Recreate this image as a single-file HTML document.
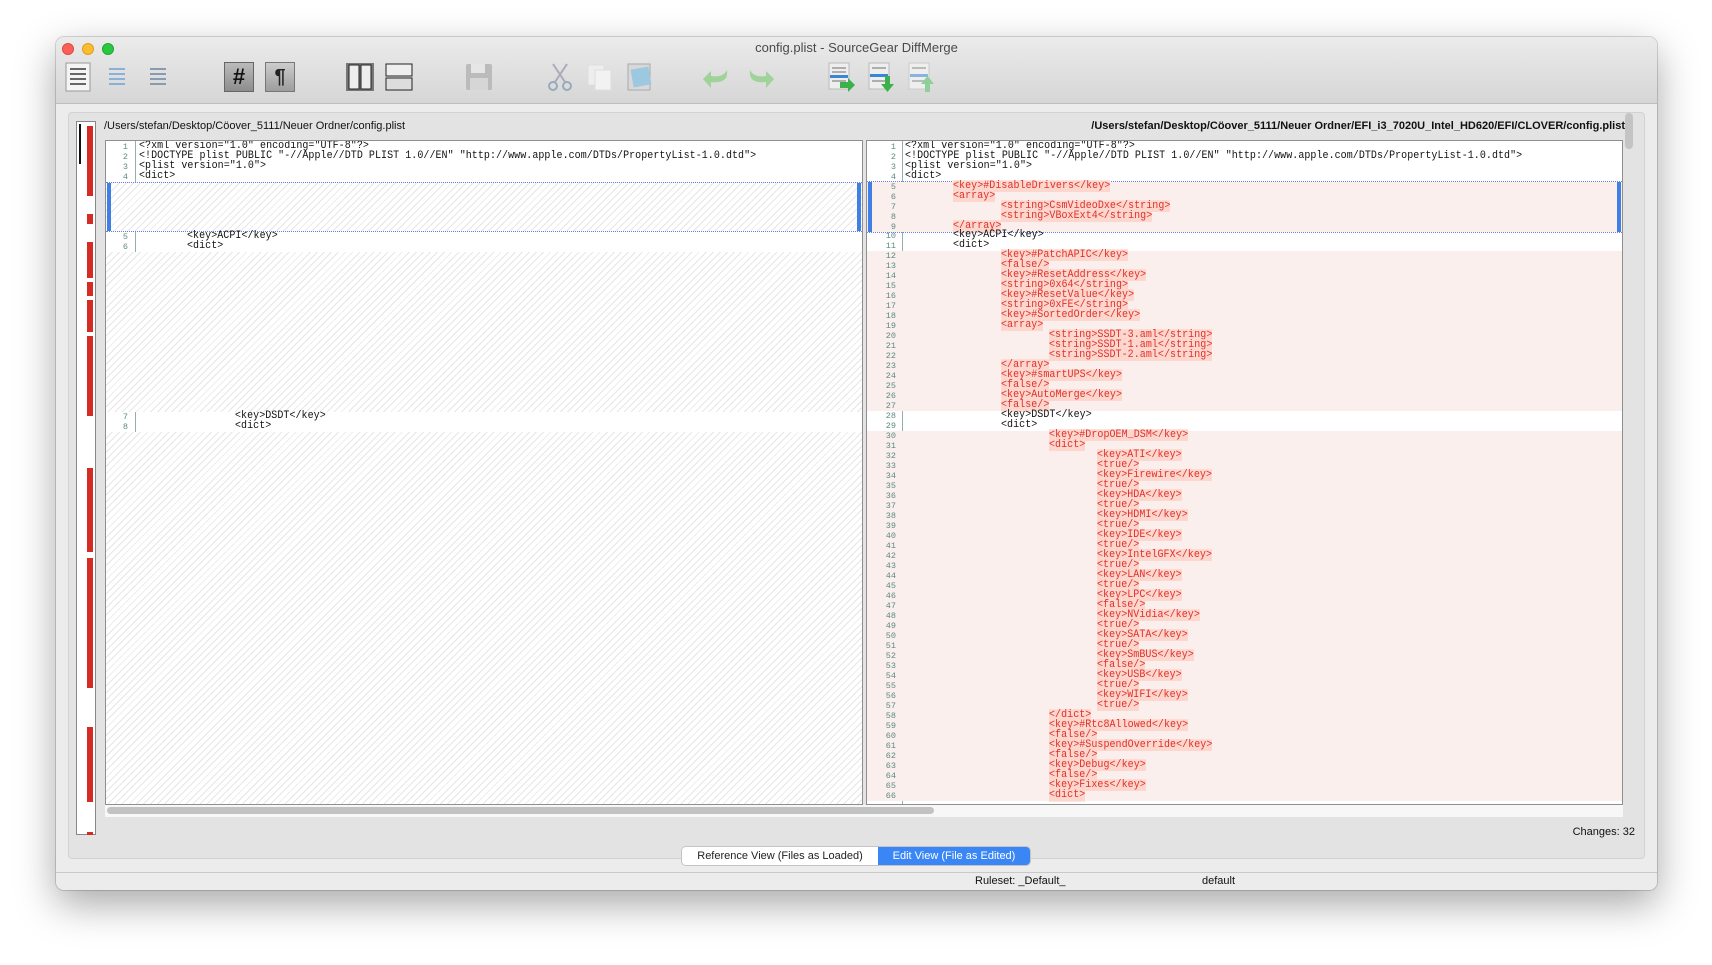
<!DOCTYPE html>
<html><head><meta charset="utf-8"><style>
*{box-sizing:border-box;margin:0;padding:0}
body{width:1712px;height:965px;background:#fff;position:relative;overflow:hidden;font-family:"Liberation Sans",sans-serif}
.win{position:absolute;left:56px;top:37px;width:1601px;height:853px;border-radius:8px;background:#ececec;box-shadow:0 14px 40px rgba(0,0,0,.35),0 0 0 1px rgba(0,0,0,.15);overflow:hidden}
.tb{position:absolute;left:0;top:0;width:100%;height:67px;background:linear-gradient(#ebebeb,#d6d6d6);border-bottom:1px solid #bdbdbd}
.tl{position:absolute;top:6px;width:12px;height:12px;border-radius:50%}
.title{position:absolute;top:3px;left:0;width:100%;text-align:center;font-size:13px;color:#4a4a4a}
.ic{position:absolute;top:25px}
.grp{position:absolute;left:12px;top:75px;width:1577px;height:747px;background:#e3e3e3;border:1px solid #d2d2d2;border-radius:4px}
.path{position:absolute;top:83px;font-size:11px;color:#111}
.pane{position:absolute;top:103px;height:665px;background:#fff;border:1px solid #8f8f8f;overflow:hidden}
.gut{position:absolute;left:0;top:0;height:100%;border-right:1px solid #8fb3a8}
.rows{position:absolute;left:0;top:1px;width:100%}
.r{height:10px;position:relative;font-family:"Liberation Mono",monospace;font-size:10px;line-height:10px;white-space:pre;color:#111}
.r .n{position:absolute;left:0;text-align:right;font-size:8.5px;color:#5c8a82}
.r .t{position:absolute;letter-spacing:0.05px;transform:scaleY(1.12);transform-origin:0 50%}
.h{background:repeating-linear-gradient(135deg,#fff 0 4px,#e6e6e6 4px 5px)}
.p{background:#faefed}
.p .t span{background:#fdd6cd;color:#e0302a}
.L .n{width:22px}.L .t{left:33px}
.R .n{width:29px}.R .t{left:38px}
.ov{position:absolute;background:#d42b24;left:10px;width:6px}
</style></head><body>
<div class="win">
<div class="tb">
<div class="tl" style="left:6px;background:#fc5f57;border:1px solid #de4a41"></div>
<div class="tl" style="left:26px;background:#fdbc2e;border:1px solid #dd9f21"></div>
<div class="tl" style="left:46px;background:#29c840;border:1px solid #1ea932"></div>
<div class="title">config.plist - SourceGear DiffMerge</div>
<svg class="ic" style="left:8px" width="30" height="30"><rect x="2" y="1" width="24" height="28" fill="#f4f4f4" stroke="#999"/><g stroke="#666" stroke-width="2"><line x1="6" y1="7" x2="22" y2="7"/><line x1="6" y1="12" x2="22" y2="12"/><line x1="6" y1="17" x2="22" y2="17"/><line x1="6" y1="22" x2="22" y2="22"/></g></svg>
<svg class="ic" style="left:49px" width="30" height="30"><g stroke="#8ab0d8" stroke-width="2"><line x1="4" y1="7" x2="20" y2="7"/><line x1="4" y1="12" x2="20" y2="12"/><line x1="4" y1="17" x2="20" y2="17"/><line x1="4" y1="22" x2="20" y2="22"/></g></svg>
<svg class="ic" style="left:90px" width="30" height="30"><g stroke="#8a9ab0" stroke-width="2"><line x1="4" y1="7" x2="20" y2="7"/><line x1="4" y1="12" x2="20" y2="12"/><line x1="4" y1="17" x2="20" y2="17"/><line x1="4" y1="22" x2="20" y2="22"/></g></svg>
<div class="ic" style="left:168px;top:25px;width:30px;height:30px;background:linear-gradient(#bbb,#8d8d8d);border:1px solid #666;font:bold 22px 'Liberation Sans';text-align:center;line-height:28px;color:#111">#</div>
<div class="ic" style="left:209px;top:25px;width:30px;height:30px;background:linear-gradient(#ccc,#9d9d9d);border:1px solid #777;font:bold 20px 'Liberation Sans';text-align:center;line-height:28px;color:#222">¶</div>
<svg class="ic" style="left:289px" width="30" height="30"><rect x="1" y="1" width="28" height="28" fill="#777"/><rect x="4" y="3" width="10" height="24" fill="#eee" stroke="#222"/><rect x="16" y="3" width="10" height="24" fill="#eee" stroke="#222"/></svg>
<svg class="ic" style="left:328px" width="30" height="30"><rect x="2" y="2" width="26" height="12" fill="#eee" stroke="#222"/><rect x="2" y="16" width="26" height="12" fill="#ddd" stroke="#222"/></svg>
<svg class="ic" style="left:408px" width="30" height="30"><rect x="2" y="2" width="26" height="26" rx="2" fill="#bbb"/><rect x="7" y="2" width="14" height="9" fill="#e6e6e6"/><rect x="6" y="16" width="18" height="12" fill="#d6d6d6"/></svg>
<svg class="ic" style="left:489px" width="30" height="30"><g stroke="#aab" stroke-width="2" fill="none"><line x1="8" y1="2" x2="20" y2="20"/><line x1="22" y1="2" x2="10" y2="20"/><circle cx="8" cy="24" r="4" stroke="#9ab"/><circle cx="22" cy="24" r="4" stroke="#9ab"/></g></svg>
<svg class="ic" style="left:529px" width="30" height="30"><rect x="3" y="3" width="16" height="20" fill="#eee" stroke="#ddd"/><rect x="10" y="8" width="16" height="20" fill="#f2f2f2" stroke="#ddd"/></svg>
<svg class="ic" style="left:569px" width="30" height="30"><rect x="3" y="2" width="22" height="26" fill="#d8d8d8" stroke="#aaa"/><rect x="7" y="6" width="18" height="18" fill="#9cc8e0" transform="rotate(-10 16 15)"/></svg>
<svg class="ic" style="left:645px" width="32" height="30"><path d="M26 8 Q28 22 10 20 L10 26 L2 17 L10 9 L10 14 Q22 16 26 8Z" fill="#9fd39a"/></svg>
<svg class="ic" style="left:688px" width="32" height="30"><path d="M6 8 Q4 22 22 20 L22 26 L30 17 L22 9 L22 14 Q10 16 6 8Z" fill="#9fd39a"/></svg>
<svg class="ic" style="left:770px" width="32" height="32"><rect x="3" y="1" width="20" height="26" fill="#eee" stroke="#bbb"/><g stroke="#999" stroke-width="1.5"><line x1="6" y1="6" x2="20" y2="6"/><line x1="6" y1="10" x2="20" y2="10"/><line x1="6" y1="19" x2="20" y2="19"/></g><rect x="4" y="13" width="18" height="3" fill="#3a86d6"/><path d="M14 20 h8 v-4 l7 7 -7 7 v-4 h-8z" fill="#3cb04a"/></svg>
<svg class="ic" style="left:810px" width="32" height="32"><rect x="3" y="1" width="20" height="26" fill="#eee" stroke="#bbb"/><g stroke="#999" stroke-width="1.5"><line x1="6" y1="6" x2="20" y2="6"/><line x1="6" y1="19" x2="20" y2="19"/></g><rect x="4" y="12" width="18" height="3" fill="#3a86d6"/><path d="M19 14 h5 v8 h4 l-6.5 8 -6.5 -8 h4z" fill="#3cb04a"/></svg>
<svg class="ic" style="left:850px" width="32" height="32"><rect x="3" y="1" width="20" height="26" fill="#eee" stroke="#ccc"/><g stroke="#aaa" stroke-width="1.5"><line x1="6" y1="6" x2="20" y2="6"/><line x1="6" y1="19" x2="20" y2="19"/></g><rect x="4" y="12" width="18" height="3" fill="#8ab4e0"/><path d="M19 30 h5 v-8 h4 l-6.5 -8 -6.5 8 h4z" fill="#8fd098"/></svg>
</div>
<div class="grp"></div>
<div style="position:absolute;left:20px;top:84px;width:20px;height:714px;background:#fff;border:1px solid #888">
 <div style="position:absolute;left:2px;top:2px;width:2px;height:40px;background:#111"></div>
 <div class="ov" style="top:4px;height:70px"></div><div class="ov" style="top:92px;height:10px"></div>
 <div class="ov" style="top:120px;height:36px"></div><div class="ov" style="top:160px;height:14px"></div>
 <div class="ov" style="top:178px;height:32px"></div><div class="ov" style="top:214px;height:80px"></div>
 <div class="ov" style="top:346px;height:84px"></div><div class="ov" style="top:436px;height:130px"></div>
 <div class="ov" style="top:605px;height:75px"></div><div class="ov" style="top:710px;height:3px"></div>
</div>
<div class="path" style="left:48px">/Users/stefan/Desktop/Cöover_5111/Neuer Ordner/config.plist</div>
<div class="path" style="right:32px;font-weight:bold">/Users/stefan/Desktop/Cöover_5111/Neuer Ordner/EFI_i3_7020U_Intel_HD620/EFI/CLOVER/config.plist</div>
<div style="position:absolute;left:1569px;top:76px;width:8px;height:36px;border-radius:4px;background:#c4c4c4"></div>

<div class="pane L" style="left:49px;width:758px">
<div class="gut" style="width:30px"></div>
<div class="rows">
<div class="r"><span class="n">1</span><span class="t">&lt;?xml version="1.0" encoding="UTF-8"?&gt;</span></div>
<div class="r"><span class="n">2</span><span class="t">&lt;!DOCTYPE plist PUBLIC "-//Apple//DTD PLIST 1.0//EN" "http://www.apple.com/DTDs/PropertyList-1.0.dtd"&gt;</span></div>
<div class="r"><span class="n">3</span><span class="t">&lt;plist version="1.0"&gt;</span></div>
<div class="r"><span class="n">4</span><span class="t">&lt;dict&gt;</span></div>
<div class="h" style="height:50px;border-top:1px dotted #6b7bea;border-bottom:1px dotted #6b7bea;position:relative"><div style="position:absolute;left:1px;top:0;width:4px;height:100%;background:#3f7fe6"></div><div style="position:absolute;right:1px;top:0;width:4px;height:100%;background:#3f7fe6"></div></div>
<div class="r"><span class="n">5</span><span class="t" style="left:81px">&lt;key&gt;ACPI&lt;/key&gt;</span></div>
<div class="r"><span class="n">6</span><span class="t" style="left:81px">&lt;dict&gt;</span></div>
<div class="h" style="height:160px"></div>
<div class="r"><span class="n">7</span><span class="t" style="left:129px">&lt;key&gt;DSDT&lt;/key&gt;</span></div>
<div class="r"><span class="n">8</span><span class="t" style="left:129px">&lt;dict&gt;</span></div>
<div class="h" style="height:380px"></div>
</div></div>

<div class="pane R" style="left:810px;width:757px">
<div class="gut" style="width:36px"></div>
<div class="rows">
<div class="r"><span class="n">1</span><span class="t">&lt;?xml version="1.0" encoding="UTF-8"?&gt;</span></div>
<div class="r"><span class="n">2</span><span class="t">&lt;!DOCTYPE plist PUBLIC "-//Apple//DTD PLIST 1.0//EN" "http://www.apple.com/DTDs/PropertyList-1.0.dtd"&gt;</span></div>
<div class="r"><span class="n">3</span><span class="t">&lt;plist version="1.0"&gt;</span></div>
<div class="r"><span class="n">4</span><span class="t">&lt;dict&gt;</span></div>
<div style="position:relative;border-top:1px dotted #6b7bea;border-bottom:1px dotted #6b7bea;margin-bottom:-2px;margin-top:-1px">
<div style="position:absolute;left:1px;top:0;width:4px;height:100%;background:#3f7fe6;z-index:2"></div><div style="position:absolute;right:1px;top:0;width:4px;height:100%;background:#3f7fe6;z-index:2"></div>
<div class="r p"><span class="n">5</span><span class="t" style="left:86px"><span>&lt;key&gt;#DisableDrivers&lt;/key&gt;</span></span></div>
<div class="r p"><span class="n">6</span><span class="t" style="left:86px"><span>&lt;array&gt;</span></span></div>
<div class="r p"><span class="n">7</span><span class="t" style="left:134px"><span>&lt;string&gt;CsmVideoDxe&lt;/string&gt;</span></span></div>
<div class="r p"><span class="n">8</span><span class="t" style="left:134px"><span>&lt;string&gt;VBoxExt4&lt;/string&gt;</span></span></div>
<div class="r p"><span class="n">9</span><span class="t" style="left:86px"><span>&lt;/array&gt;</span></span></div>
</div>
<div class="r"><span class="n">10</span><span class="t" style="left:86px">&lt;key&gt;ACPI&lt;/key&gt;</span></div>
<div class="r"><span class="n">11</span><span class="t" style="left:86px">&lt;dict&gt;</span></div>
<div class="r p"><span class="n">12</span><span class="t" style="left:134px"><span>&lt;key&gt;#PatchAPIC&lt;/key&gt;</span></span></div>
<div class="r p"><span class="n">13</span><span class="t" style="left:134px"><span>&lt;false/&gt;</span></span></div>
<div class="r p"><span class="n">14</span><span class="t" style="left:134px"><span>&lt;key&gt;#ResetAddress&lt;/key&gt;</span></span></div>
<div class="r p"><span class="n">15</span><span class="t" style="left:134px"><span>&lt;string&gt;0x64&lt;/string&gt;</span></span></div>
<div class="r p"><span class="n">16</span><span class="t" style="left:134px"><span>&lt;key&gt;#ResetValue&lt;/key&gt;</span></span></div>
<div class="r p"><span class="n">17</span><span class="t" style="left:134px"><span>&lt;string&gt;0xFE&lt;/string&gt;</span></span></div>
<div class="r p"><span class="n">18</span><span class="t" style="left:134px"><span>&lt;key&gt;#SortedOrder&lt;/key&gt;</span></span></div>
<div class="r p"><span class="n">19</span><span class="t" style="left:134px"><span>&lt;array&gt;</span></span></div>
<div class="r p"><span class="n">20</span><span class="t" style="left:182px"><span>&lt;string&gt;SSDT-3.aml&lt;/string&gt;</span></span></div>
<div class="r p"><span class="n">21</span><span class="t" style="left:182px"><span>&lt;string&gt;SSDT-1.aml&lt;/string&gt;</span></span></div>
<div class="r p"><span class="n">22</span><span class="t" style="left:182px"><span>&lt;string&gt;SSDT-2.aml&lt;/string&gt;</span></span></div>
<div class="r p"><span class="n">23</span><span class="t" style="left:134px"><span>&lt;/array&gt;</span></span></div>
<div class="r p"><span class="n">24</span><span class="t" style="left:134px"><span>&lt;key&gt;#smartUPS&lt;/key&gt;</span></span></div>
<div class="r p"><span class="n">25</span><span class="t" style="left:134px"><span>&lt;false/&gt;</span></span></div>
<div class="r p"><span class="n">26</span><span class="t" style="left:134px"><span>&lt;key&gt;AutoMerge&lt;/key&gt;</span></span></div>
<div class="r p"><span class="n">27</span><span class="t" style="left:134px"><span>&lt;false/&gt;</span></span></div>
<div class="r"><span class="n">28</span><span class="t" style="left:134px">&lt;key&gt;DSDT&lt;/key&gt;</span></div>
<div class="r"><span class="n">29</span><span class="t" style="left:134px">&lt;dict&gt;</span></div>
<div class="r p"><span class="n">30</span><span class="t" style="left:182px"><span>&lt;key&gt;#DropOEM_DSM&lt;/key&gt;</span></span></div>
<div class="r p"><span class="n">31</span><span class="t" style="left:182px"><span>&lt;dict&gt;</span></span></div>
<div class="r p"><span class="n">32</span><span class="t" style="left:230px"><span>&lt;key&gt;ATI&lt;/key&gt;</span></span></div>
<div class="r p"><span class="n">33</span><span class="t" style="left:230px"><span>&lt;true/&gt;</span></span></div>
<div class="r p"><span class="n">34</span><span class="t" style="left:230px"><span>&lt;key&gt;Firewire&lt;/key&gt;</span></span></div>
<div class="r p"><span class="n">35</span><span class="t" style="left:230px"><span>&lt;true/&gt;</span></span></div>
<div class="r p"><span class="n">36</span><span class="t" style="left:230px"><span>&lt;key&gt;HDA&lt;/key&gt;</span></span></div>
<div class="r p"><span class="n">37</span><span class="t" style="left:230px"><span>&lt;true/&gt;</span></span></div>
<div class="r p"><span class="n">38</span><span class="t" style="left:230px"><span>&lt;key&gt;HDMI&lt;/key&gt;</span></span></div>
<div class="r p"><span class="n">39</span><span class="t" style="left:230px"><span>&lt;true/&gt;</span></span></div>
<div class="r p"><span class="n">40</span><span class="t" style="left:230px"><span>&lt;key&gt;IDE&lt;/key&gt;</span></span></div>
<div class="r p"><span class="n">41</span><span class="t" style="left:230px"><span>&lt;true/&gt;</span></span></div>
<div class="r p"><span class="n">42</span><span class="t" style="left:230px"><span>&lt;key&gt;IntelGFX&lt;/key&gt;</span></span></div>
<div class="r p"><span class="n">43</span><span class="t" style="left:230px"><span>&lt;true/&gt;</span></span></div>
<div class="r p"><span class="n">44</span><span class="t" style="left:230px"><span>&lt;key&gt;LAN&lt;/key&gt;</span></span></div>
<div class="r p"><span class="n">45</span><span class="t" style="left:230px"><span>&lt;true/&gt;</span></span></div>
<div class="r p"><span class="n">46</span><span class="t" style="left:230px"><span>&lt;key&gt;LPC&lt;/key&gt;</span></span></div>
<div class="r p"><span class="n">47</span><span class="t" style="left:230px"><span>&lt;false/&gt;</span></span></div>
<div class="r p"><span class="n">48</span><span class="t" style="left:230px"><span>&lt;key&gt;NVidia&lt;/key&gt;</span></span></div>
<div class="r p"><span class="n">49</span><span class="t" style="left:230px"><span>&lt;true/&gt;</span></span></div>
<div class="r p"><span class="n">50</span><span class="t" style="left:230px"><span>&lt;key&gt;SATA&lt;/key&gt;</span></span></div>
<div class="r p"><span class="n">51</span><span class="t" style="left:230px"><span>&lt;true/&gt;</span></span></div>
<div class="r p"><span class="n">52</span><span class="t" style="left:230px"><span>&lt;key&gt;SmBUS&lt;/key&gt;</span></span></div>
<div class="r p"><span class="n">53</span><span class="t" style="left:230px"><span>&lt;false/&gt;</span></span></div>
<div class="r p"><span class="n">54</span><span class="t" style="left:230px"><span>&lt;key&gt;USB&lt;/key&gt;</span></span></div>
<div class="r p"><span class="n">55</span><span class="t" style="left:230px"><span>&lt;true/&gt;</span></span></div>
<div class="r p"><span class="n">56</span><span class="t" style="left:230px"><span>&lt;key&gt;WIFI&lt;/key&gt;</span></span></div>
<div class="r p"><span class="n">57</span><span class="t" style="left:230px"><span>&lt;true/&gt;</span></span></div>
<div class="r p"><span class="n">58</span><span class="t" style="left:182px"><span>&lt;/dict&gt;</span></span></div>
<div class="r p"><span class="n">59</span><span class="t" style="left:182px"><span>&lt;key&gt;#Rtc8Allowed&lt;/key&gt;</span></span></div>
<div class="r p"><span class="n">60</span><span class="t" style="left:182px"><span>&lt;false/&gt;</span></span></div>
<div class="r p"><span class="n">61</span><span class="t" style="left:182px"><span>&lt;key&gt;#SuspendOverride&lt;/key&gt;</span></span></div>
<div class="r p"><span class="n">62</span><span class="t" style="left:182px"><span>&lt;false/&gt;</span></span></div>
<div class="r p"><span class="n">63</span><span class="t" style="left:182px"><span>&lt;key&gt;Debug&lt;/key&gt;</span></span></div>
<div class="r p"><span class="n">64</span><span class="t" style="left:182px"><span>&lt;false/&gt;</span></span></div>
<div class="r p"><span class="n">65</span><span class="t" style="left:182px"><span>&lt;key&gt;Fixes&lt;/key&gt;</span></span></div>
<div class="r p"><span class="n">66</span><span class="t" style="left:182px"><span>&lt;dict&gt;</span></span></div>
</div></div>

<div style="position:absolute;left:49px;top:768px;width:1518px;height:12px;background:#f7f7f7"></div>
<div style="position:absolute;left:51px;top:770px;width:827px;height:7px;border-radius:4px;background:#c2c2c2"></div>
<div style="position:absolute;right:22px;top:789px;font-size:11px;color:#111">Changes: 32</div>
<div style="position:absolute;left:626px;top:810px;height:18px;display:flex;font-size:11px;border-radius:4px;overflow:hidden;box-shadow:0 0 0 1px #c4c4c4">
<div style="width:196px;background:#fff;color:#222;text-align:center;line-height:18px">Reference View (Files as Loaded)</div>
<div style="width:152px;background:#3a86f5;color:#fff;text-align:center;line-height:18px">Edit View (File as Edited)</div></div>
<div style="position:absolute;left:0;top:835px;width:100%;height:18px;border-top:1px solid #c8c8c8;background:#ececec"></div>
<div style="position:absolute;left:919px;top:838px;font-size:11px;color:#111">Ruleset: _Default_</div>
<div style="position:absolute;left:1146px;top:838px;font-size:11px;color:#111">default</div>
</div>
</body></html>
